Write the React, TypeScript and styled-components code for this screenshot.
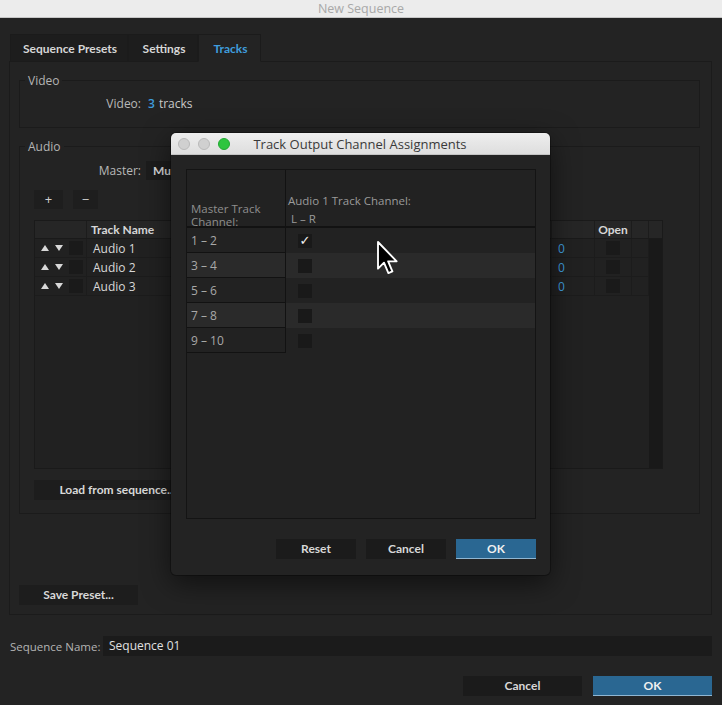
import React from 'react';
import styled, {createGlobalStyle} from 'styled-components';

const boldFont = `"Lato", "Open Sans", "Liberation Sans", sans-serif`

const GlobalStyle = createGlobalStyle`
  html, body {
    margin: 0;
    padding: 0;
    background: #232323;
    overflow: hidden;
  }
  body {
    font-family: "Open Sans", "Liberation Sans", sans-serif;
    font-size: 12px;
    color: #c8c8c8;
  }
  * {
    box-sizing: border-box;
  }
`

const Window = styled.div`
  position: relative;
  width: 722px;
  height: 705px;
  background: #232323;
  overflow: hidden;
`

const TitleBar = styled.div`
  height: 18px;
  background: #ececec;
  border-bottom: 1px solid #c6c6c6;
  color: #a8a8a8;
  font-size: 12.5px;
  line-height: 17px;
  text-align: center;
`

const Content = styled.div`
  padding: 16px 10px 0 9px;
`

const TabBar = styled.div`
  display: flex;
  margin-left: 1px;
  margin-bottom: -1px;
  position: relative;
  z-index: 1;
`

const Tab = styled.div<{ $active?: boolean; $w: number }>`
  width: ${p => p.$w}px;
  height: 28px;
  line-height: 27px;
  padding-left: 2px;
  text-align: center;
  font-family: ${boldFont};
  font-weight: 700;
  font-size: 12px;
  color: ${p => p.$active ? '#3f9ddd' : '#d6d6d6'};
  background: ${p => p.$active ? '#232323' : '#1d1d1d'};
  border: 1px solid #1b1b1b;
  border-bottom-color: ${p => p.$active ? '#232323' : '#1b1b1b'};
`

const Panel = styled.div`
  height: 554px;
  border: 1px solid #1b1b1b;
  padding: 11px 11px 0 9px;
`

const Group = styled.fieldset<{ $pb: number }>`
  margin: 0 0 11px 0;
  padding: 0 0 ${p => p.$pb}px 0;
  border: 1px solid #1b1b1b;
  min-width: 0;
`

const Legend = styled.legend`
  margin-left: 5px;
  padding: 0 3px;
  line-height: 15px;
  font-size: 12px;
  color: #b4b4b4;
`

const FieldRow = styled.div<{ $mt: number }>`
  display: flex;
  align-items: center;
  height: 19px;
  margin-top: ${p => p.$mt}px;
`

const FieldLabel = styled.div`
  width: 121px;
  text-align: right;
  color: #b8b8b8;
`

const Value = styled.div`
  margin-left: 7px;
  color: #c8c8c8;
`

const Blue = styled.span`
  color: #3f9ddd;
  font-weight: 600;
  margin-right: 4px;
`

const Dropdown = styled.div`
  margin-left: 5px;
  width: 150px;
  height: 19px;
  line-height: 19px;
  padding-left: 7px;
  background: #1c1c1c;
  color: #d8d8d8;
  font-family: ${boldFont};
  font-weight: 700;
`

const AddRow = styled.div`
  display: flex;
  gap: 10px;
  margin: 10px 0 0 14px;
`

const SmallButton = styled.div<{ $w: number }>`
  width: ${p => p.$w}px;
  height: 19px;
  line-height: 18px;
  text-align: center;
  background: #1e1e1e;
  color: #d0d0d0;
  font-size: 13px;
`

const TrackTable = styled.div`
  margin: 11px 0 0 14px;
  width: 629px;
  height: 249px;
  border: 1px solid #1a1a1a;
  display: flex;
  flex-direction: column;
  background: #212121;
`

const columns = '52px 200px 265px 43px 37px 17px'

const HeaderRow = styled.div`
  display: grid;
  grid-template-columns: ${columns} 1fr;
  height: 18px;
  background: #262626;
  border-bottom: 1px solid #1a1a1a;
`

const HeadCell = styled.div<{ $center?: boolean }>`
  font-family: ${boldFont};
  font-weight: 700;
  font-size: 12px;
  line-height: 17px;
  color: #d6d6d6;
  padding-left: ${p => p.$center ? 0 : 4}px;
  text-align: ${p => p.$center ? 'center' : 'left'};
  border-right: 1px solid #1c1c1c;
  &:last-child {
    border-right: none;
  }
`

const TableBody = styled.div`
  flex: 1;
  display: flex;
`

const Rows = styled.div`
  flex: 1;
  background: #212121;
`

const Gutter = styled.div`
  width: 15px;
  background: #191919;
`

const TrackRow = styled.div`
  display: grid;
  grid-template-columns: ${columns};
  height: 19px;
  border-bottom: 1px solid #1c1c1c;
`

const Cell = styled.div<{ $center?: boolean }>`
  display: flex;
  align-items: center;
  justify-content: ${p => p.$center ? 'center' : 'flex-start'};
  border-right: 1px solid #1c1c1c;
  padding-left: ${p => p.$center ? 0 : 6}px;
  color: #d8d8d8;
  font-size: 12px;
`

const Handle = styled.div`
  display: flex;
  align-items: center;
  gap: 6px;
  padding-left: 6px;
  border-right: 1px solid #1c1c1c;
`

const Arrow = styled.span<{ $down?: boolean }>`
  width: 0;
  height: 0;
  border-left: 4px solid transparent;
  border-right: 4px solid transparent;
  ${p => p.$down ? 'border-top: 6px solid #d8d8d8;' : 'border-bottom: 6px solid #d8d8d8;'}
`

const DarkBox = styled.span`
  width: 14px;
  height: 14px;
  background: #1a1a1a;
`

const BlueNum = styled.span`
  color: #3f9ddd;
`

const WideButton = styled.div<{ $w: number; $ml: number; $mt: number }>`
  width: ${p => p.$w}px;
  height: 20px;
  line-height: 20px;
  margin: ${p => p.$mt}px 0 0 ${p => p.$ml}px;
  text-align: center;
  background: #1d1d1d;
  color: #d8d8d8;
  font-family: ${boldFont};
  font-weight: 700;
  font-size: 12px;
`

const NameRow = styled.div`
  display: flex;
  align-items: center;
  margin-top: 21px;
  height: 20px;
`

const NameLabel = styled.div`
  width: 94px;
  padding-left: 1px;
  white-space: nowrap;
  font-size: 11.5px;
  color: #b4b4b4;
`

const NameInput = styled.div`
  flex: 1;
  height: 20px;
  line-height: 20px;
  padding-left: 6px;
  background: #1b1b1b;
  color: #e0e0e0;
`

const Footer = styled.div`
  display: flex;
  justify-content: flex-end;
  gap: 11px;
  margin-top: 20px;
`

const ActionButton = styled.div<{ $primary?: boolean; $w: number }>`
  width: ${p => p.$w}px;
  height: 20px;
  line-height: 20px;
  text-align: center;
  font-family: ${boldFont};
  font-weight: 700;
  font-size: 12px;
  color: ${p => p.$primary ? '#f0f0f0' : '#d8d8d8'};
  background: ${p => p.$primary ? '#2a6792' : '#1b1b1b'};
  box-shadow: ${p => p.$primary ? 'inset 0 -1px 0 #8fb6d2' : 'none'};
`

/* ---------- dialog ---------- */

const Dialog = styled.div`
  position: absolute;
  left: 171px;
  top: 133px;
  width: 379px;
  height: 442px;
  background: #232323;
  border-radius: 5px;
  overflow: hidden;
  box-shadow: 0 8px 28px rgba(0, 0, 0, 0.55), 0 0 0 1px rgba(0, 0, 0, 0.3);
`

const DialogTitle = styled.div`
  height: 22px;
  background: linear-gradient(#eeeeee, #dedede);
  border-bottom: 1px solid #c4c4c4;
  display: flex;
  align-items: center;
  padding-left: 7px;
  gap: 8px;
`

const Light = styled.span<{ $color: string; $border: string }>`
  width: 12px;
  height: 12px;
  border-radius: 50%;
  background: ${p => p.$color};
  border: 1px solid ${p => p.$border};
`

const DialogTitleText = styled.div`
  flex: 1;
  margin-left: 14px;
  font-size: 13px;
  color: #3a3a3a;
  padding-right: 82px;
  text-align: center;
  white-space: nowrap;
`

const DialogBody = styled.div`
  padding: 14px 14px 0 15px;
`

const ChannelBox = styled.div`
  width: 350px;
  height: 350px;
  border: 1px solid #141414;
  background: #222222;
`

const ChannelGrid = styled.div`
  display: grid;
  grid-template-columns: 99px 1fr;
`

const ChannelHead = styled.div<{ $left?: boolean }>`
  height: 58px;
  display: flex;
  flex-direction: column;
  justify-content: flex-end;
  padding-left: ${p => p.$left ? 4 : 2}px;
  border-bottom: 2px solid #121212;
  border-right: ${p => p.$left ? '1px solid #121212' : 'none'};
  color: #8e8e8e;
  font-size: 11.5px;
  line-height: 13px;
  & > div {
    position: relative;
    top: 2px;
  }
`

const HeadLine = styled.div<{ $indent?: number }>`
  line-height: 18px;
  padding-left: ${p => p.$indent || 0}px;
  color: #9a9a9a;
`

const ChannelCell = styled.div<{ $alt: boolean; $left?: boolean }>`
  height: 25px;
  display: flex;
  align-items: center;
  padding-left: ${p => p.$left ? 4 : 12}px;
  background: ${p => p.$alt ? '#2a2a2a' : '#222222'};
  border-right: ${p => p.$left ? '1px solid #121212' : 'none'};
  border-bottom: ${p => p.$left ? '1px solid #121212' : 'none'};
  color: #a8a8a8;
  font-size: 12px;
`

const Check = styled.span`
  width: 14px;
  height: 14px;
  background: #191919;
  color: #f2f2f2;
  font-size: 13px;
  font-weight: 700;
  line-height: 13px;
  text-align: center;
  font-family: "DejaVu Sans", sans-serif;
`

const DialogButtons = styled.div`
  display: flex;
  justify-content: flex-end;
  gap: 10px;
  margin-top: 20px;
`

const Cursor = styled.svg`
  position: absolute;
  left: 376px;
  top: 240px;
`

const channels = ['1 – 2', '3 – 4', '5 – 6', '7 – 8', '9 – 10']
const tracks = ['Audio 1', 'Audio 2', 'Audio 3']

const App = () => {
    return (
        <Window>
            <GlobalStyle/>
            <TitleBar>New Sequence</TitleBar>
            <Content>
                <TabBar>
                    <Tab $w={118}>Sequence Presets</Tab>
                    <Tab $w={70}>Settings</Tab>
                    <Tab $w={63} $active>Tracks</Tab>
                </TabBar>
                <Panel>
                    <Group $pb={14}>
                        <Legend>Video</Legend>
                        <FieldRow $mt={6}>
                            <FieldLabel>Video:</FieldLabel>
                            <Value><Blue>3</Blue>tracks</Value>
                        </FieldRow>
                    </Group>
                    <Group $pb={13}>
                        <Legend>Audio</Legend>
                        <FieldRow $mt={7}>
                            <FieldLabel>Master:</FieldLabel>
                            <Dropdown>Multichannel</Dropdown>
                        </FieldRow>
                        <AddRow>
                            <SmallButton $w={29}>+</SmallButton>
                            <SmallButton $w={25}>−</SmallButton>
                        </AddRow>
                        <TrackTable>
                            <HeaderRow>
                                <HeadCell/>
                                <HeadCell>Track Name</HeadCell>
                                <HeadCell>Track Type</HeadCell>
                                <HeadCell/>
                                <HeadCell $center>Open</HeadCell>
                                <HeadCell/>
                                <HeadCell/>
                            </HeaderRow>
                            <TableBody>
                                <Rows>
                                    {tracks.map(t =>
                                        <TrackRow key={t}>
                                            <Handle>
                                                <Arrow/>
                                                <Arrow $down/>
                                                <DarkBox/>
                                            </Handle>
                                            <Cell>{t}</Cell>
                                            <Cell>Standard</Cell>
                                            <Cell><BlueNum>0</BlueNum></Cell>
                                            <Cell $center><DarkBox/></Cell>
                                            <Cell/>
                                        </TrackRow>
                                    )}
                                </Rows>
                                <Gutter/>
                            </TableBody>
                        </TrackTable>
                        <WideButton $w={167} $ml={14} $mt={11}>Load from sequence...</WideButton>
                    </Group>
                    <WideButton $w={119} $ml={0} $mt={71}>Save Preset...</WideButton>
                </Panel>
                <NameRow>
                    <NameLabel>Sequence Name:</NameLabel>
                    <NameInput>Sequence 01</NameInput>
                </NameRow>
                <Footer>
                    <ActionButton $w={119}>Cancel</ActionButton>
                    <ActionButton $w={119} $primary>OK</ActionButton>
                </Footer>
            </Content>

            <Dialog>
                <DialogTitle>
                    <Light $color="#d0d0d0" $border="#b9b9b9"/>
                    <Light $color="#d0d0d0" $border="#b9b9b9"/>
                    <Light $color="#2ec53f" $border="#22a832"/>
                    <DialogTitleText>Track Output Channel Assignments</DialogTitleText>
                </DialogTitle>
                <DialogBody>
                    <ChannelBox>
                        <ChannelGrid>
                            <ChannelHead $left>
                                <div>Master Track</div>
                                <div>Channel:</div>
                            </ChannelHead>
                            <ChannelHead>
                                <HeadLine>Audio 1 Track Channel:</HeadLine>
                                <HeadLine $indent={3}>L – R</HeadLine>
                            </ChannelHead>
                            {channels.map((c, i) =>
                                <React.Fragment key={c}>
                                    <ChannelCell $left $alt={i % 2 === 1}>{c}</ChannelCell>
                                    <ChannelCell $alt={i % 2 === 1}>
                                        <Check>{i === 0 ? '✓' : ''}</Check>
                                    </ChannelCell>
                                </React.Fragment>
                            )}
                        </ChannelGrid>
                    </ChannelBox>
                    <DialogButtons>
                        <ActionButton $w={80}>Reset</ActionButton>
                        <ActionButton $w={80}>Cancel</ActionButton>
                        <ActionButton $w={80} $primary>OK</ActionButton>
                    </DialogButtons>
                </DialogBody>
            </Dialog>

            <Cursor width="24" height="36" viewBox="0 0 18 27">
                <path d="M1.5 1.5 L1.5 21.5 L6 17 L9.3 24.8 L12.3 23.5 L9.1 16 L15.5 16 Z"
                      fill="#000" stroke="#fff" strokeWidth="1.4" strokeLinejoin="round"/>
            </Cursor>
        </Window>
    );
};

export default App;
